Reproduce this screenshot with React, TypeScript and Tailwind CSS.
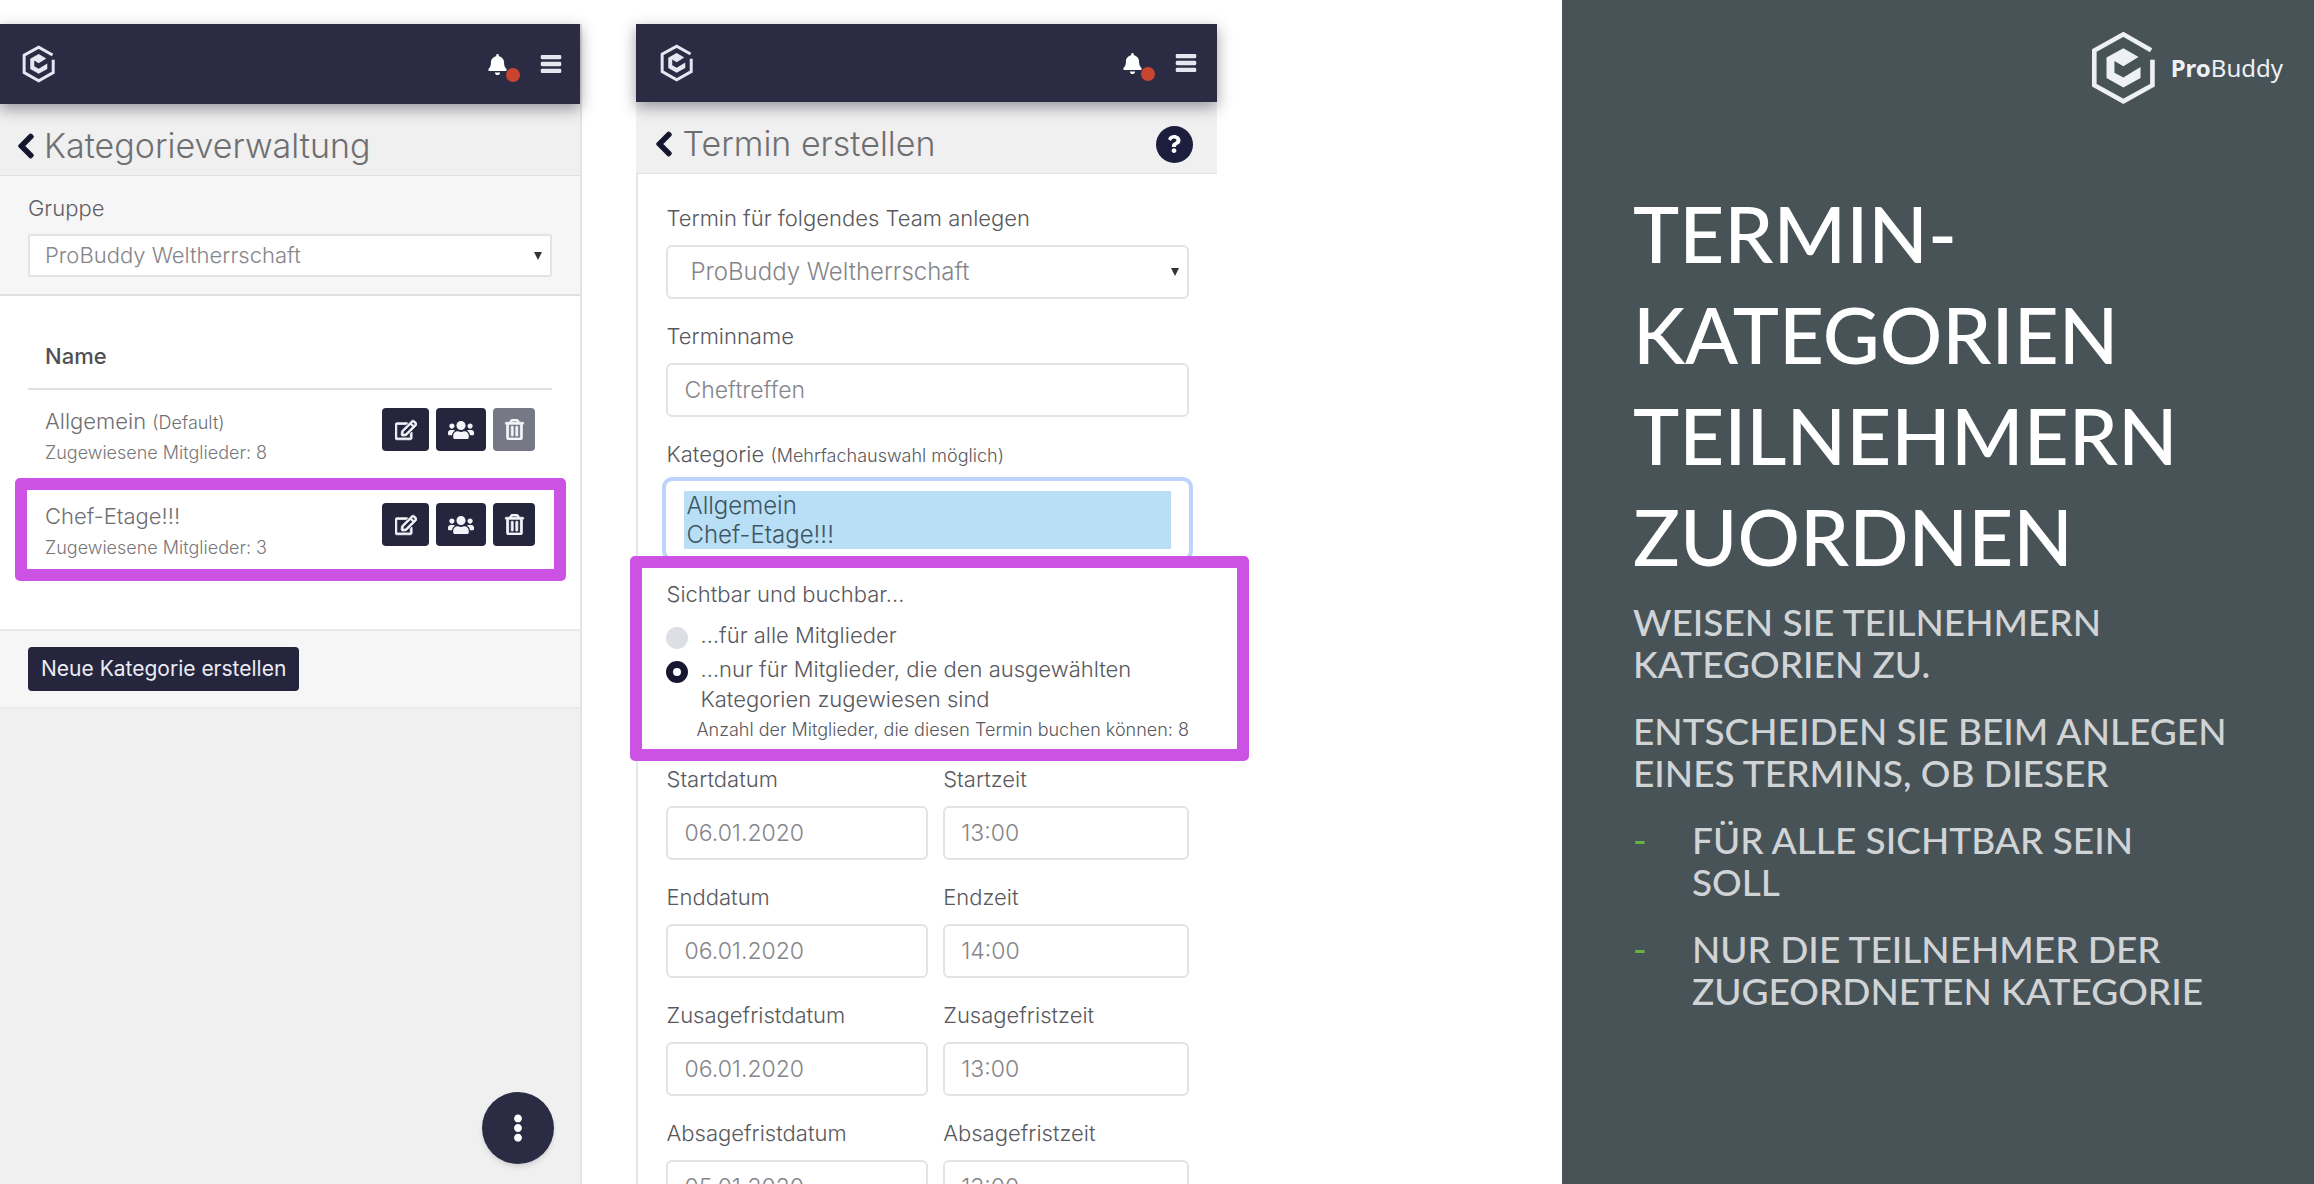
import type { ReactNode } from "react";
import {
  FaBars,
  FaBell,
  FaChevronLeft,
  FaEllipsisV,
  FaQuestion,
  FaRegEdit,
  FaRegTrashAlt,
  FaUsers,
} from "react-icons/fa";

function Logo({ className, weight = 14 }: { className: string; weight?: number }) {
  return (
    <svg viewBox="62 58 202 230" className={className} aria-hidden="true">
      <path
        d="M247 119 L163 71 L75 120 V225 L163 274 L251 225 V148"
        fill="none"
        stroke="currentColor"
        strokeWidth={weight}
      />
      <path
        d="M163 113 L209 140 L163 168 L136 152 V187 L163 202 L215 170 V203 L163 232 L112 203 V141 Z"
        fill="currentColor"
      />
    </svg>
  );
}

function AppHeader({ className }: { className: string }) {
  return (
    <header
      className={`relative z-10 flex shrink-0 items-center justify-between bg-[#2b2c43] text-white shadow-[0_5px_14px_rgba(40,40,60,0.45)] ${className}`}
    >
      <a href="#start" aria-label="ProBuddy">
        <Logo weight={18} className="h-[38px] text-[#e6e7f2]" />
      </a>
      <div className="flex items-center">
        <button type="button" aria-label="Benachrichtigungen" className="relative mr-8">
          <FaBell className="size-[21px]" />
          <span className="absolute top-3.5 left-[19px] size-3.5 rounded-full bg-[#c8452f]" />
        </button>
        <button type="button" aria-label="Menü">
          <FaBars className="size-[22px] stroke-current stroke-[30px] text-[#e6e6f0]" />
        </button>
      </div>
    </header>
  );
}

function TitleBar({ title, className, children }: { title: string; className: string; children?: ReactNode }) {
  return (
    <div
      className={`flex shrink-0 items-center border-b border-[#e0e0e2] bg-[#f0f0f0] pt-[22px] pb-[9px] ${className}`}
    >
      <button type="button" aria-label="Zurück" className="mr-1 text-[#15152f]">
        <FaChevronLeft className="size-7 stroke-current stroke-[20px]" />
      </button>
      <h2 className="text-[34px] leading-10 font-light text-[#6f6f72]">{title}</h2>
      {children}
    </div>
  );
}

function SelectBox({ id, className }: { id: string; className: string }) {
  return (
    <div className="relative">
      <select
        id={id}
        className={`w-full appearance-none border-2 border-[#e3e3e6] bg-white font-light text-[#85858a] ${className}`}
      >
        <option>ProBuddy Weltherrschaft</option>
      </select>
      <svg
        viewBox="0 0 8 8"
        aria-hidden="true"
        className="pointer-events-none absolute top-1/2 right-2.5 size-2 -translate-y-1/2 text-[#333]"
      >
        <path d="M0 0 H8 L4 8 Z" fill="currentColor" />
      </svg>
    </div>
  );
}

function Highlight({ className }: { className: string }) {
  return (
    <span
      className={`pointer-events-none absolute z-20 rounded-[5px] border-12 border-[#cc52e3] ${className}`}
    />
  );
}

function CategoryRow({
  name,
  hint,
  members,
  locked,
  marked,
}: {
  name: string;
  hint?: string;
  members: number;
  locked?: boolean;
  marked?: boolean;
}) {
  return (
    <tr className="relative">
      <td className="pt-[15px] pb-4 pl-[17px] align-top font-light">
        <div className="text-[22px] leading-8 text-[#6f6f73]">
          {name} {hint && <span className="text-lg">{hint}</span>}
        </div>
        <div className="text-lg leading-8 text-[#77777b]">Zugewiesene Mitglieder: {members}</div>
      </td>
      <td className="pt-[18px] pr-[17px] align-top">
        <div className="flex justify-end gap-[7px] text-[#f4f4fa]">
          <button
            type="button"
            aria-label="Bearbeiten"
            className="flex h-[43px] w-[47px] items-center justify-center rounded-[4px] bg-[#25263e]"
          >
            <FaRegEdit className="size-[22px] stroke-current stroke-[20px]" />
          </button>
          <button
            type="button"
            aria-label="Mitglieder"
            className="flex h-[43px] w-[50px] items-center justify-center rounded-[4px] bg-[#25263e]"
          >
            <FaUsers className="size-[26px]" />
          </button>
          <button
            type="button"
            aria-label="Löschen"
            disabled={locked}
            className="flex h-[43px] w-[42px] items-center justify-center rounded-[4px] bg-[#25263e] disabled:bg-[#777886]"
          >
            <FaRegTrashAlt className="size-[21px] stroke-current stroke-[20px]" />
          </button>
        </div>
        {marked && <Highlight className="-top-[7px] right-[-14px] -bottom-px left-[-13px]" />}
      </td>
    </tr>
  );
}

function Field({ id, label, value }: { id: string; label: string; value: string }) {
  return (
    <div>
      <label htmlFor={id} className="mb-[13px] block text-[22px] leading-7">
        {label}
      </label>
      <input
        id={id}
        type="text"
        defaultValue={value}
        className="h-[54px] w-full rounded-md border-2 border-[#e3e3e6] bg-white px-4 text-[23px] font-light text-[#85858a]"
      />
    </div>
  );
}

const schedule = [
  { key: "start", date: "Startdatum", time: "Startzeit", day: "06.01.2020", hour: "13:00" },
  { key: "ende", date: "Enddatum", time: "Endzeit", day: "06.01.2020", hour: "14:00" },
  { key: "zusage", date: "Zusagefristdatum", time: "Zusagefristzeit", day: "06.01.2020", hour: "13:00" },
  { key: "absage", date: "Absagefristdatum", time: "Absagefristzeit", day: "05.01.2020", hour: "13:00" },
];

function CategoryPanel() {
  return (
    <section className="relative flex flex-1 flex-col border-r-2 border-[#e3e3e6] bg-[#f0f0f0]">
      <AppHeader className="h-20 pr-[18px] pl-[22px]" />
      <TitleBar title="Kategorieverwaltung" className="pl-3" />
      <div className="border-b-2 border-[#e0e0e2] bg-[#f6f6f6] px-7 pt-[18px] pb-[17px]">
        <label htmlFor="gruppe" className="mb-3 block text-[22px] leading-7 font-light text-[#5f5f64]">
          Gruppe
        </label>
        <SelectBox id="gruppe" className="h-[43px] rounded-[3px] px-[15px] text-[22px]" />
      </div>
      <div className="bg-white px-7 pb-[49px]">
        <table className="w-full">
          <thead>
            <tr className="border-b-2 border-[#dfe0e6]">
              <th
                colSpan={2}
                className="pt-[46px] pb-[18px] pl-[17px] text-left text-[22px] leading-7 font-medium text-[#505057]"
              >
                Name
              </th>
            </tr>
          </thead>
          <tbody>
            <CategoryRow name="Allgemein" hint="(Default)" members={8} locked />
            <CategoryRow name="Chef-Etage!!!" members={3} marked />
          </tbody>
        </table>
      </div>
      <div className="border-y-2 border-[#e9e9eb] bg-[#f6f6f6] px-7 py-4">
        <button
          type="button"
          className="h-11 rounded-[4px] bg-[#25263e] px-[13px] text-[21px] text-[#ececf4]"
        >
          Neue Kategorie erstellen
        </button>
      </div>
      <button
        type="button"
        aria-label="Mehr"
        className="absolute right-[26px] bottom-5 flex size-[72px] items-center justify-center rounded-full bg-[#2b2c43] text-white shadow-md"
      >
        <FaEllipsisV className="size-7" />
      </button>
    </section>
  );
}

function AppointmentPanel() {
  return (
    <section className="flex flex-1 flex-col">
      <AppHeader className="h-[78px] pr-5 pl-6" />
      <TitleBar title="Termin erstellen" className="pr-6 pl-3.5">
        <button
          type="button"
          aria-label="Hilfe"
          className="ml-auto flex size-[37px] items-center justify-center rounded-full bg-[#1d1d3d] text-white"
        >
          <FaQuestion className="size-[18px]" />
        </button>
      </TitleBar>
      <form className="flex flex-col gap-[23px] border-l-2 border-[#e6e6ea] pt-[30px] pr-7 pl-7 font-light text-[#58585d]">
        <div>
          <label htmlFor="team" className="mb-[13px] block text-[22px] leading-7">
            Termin für folgendes Team anlegen
          </label>
          <SelectBox id="team" className="h-[54px] rounded-md px-[22px] text-[24px]" />
        </div>
        <Field id="terminname" label="Terminname" value="Cheftreffen" />
        <div>
          <label htmlFor="kategorie" className="mb-[11px] block text-[22px] leading-7">
            Kategorie <span className="text-lg">(Mehrfachauswahl möglich)</span>
          </label>
          <select
            id="kategorie"
            multiple
            defaultValue={["Allgemein", "Chef-Etage!!!"]}
            className="block h-[76px] w-full appearance-none overflow-hidden rounded-md bg-white px-[18px] py-2.5 text-[24px] leading-7 ring-4 ring-[#bcd3fb]"
          >
            <option className="h-7 bg-linear-to-r from-[#b8dff5] to-[#b8dff5] p-0 pl-0.5 font-light checked:text-[#3d5562]">
              Allgemein
            </option>
            <option className="h-7 bg-linear-to-r from-[#b8dff5] to-[#b8dff5] p-0 pl-0.5 font-light checked:text-[#3d5562]">
              Chef-Etage!!!
            </option>
          </select>
        </div>
        <div className="relative">
          <fieldset className="text-[22px]">
            <legend className="mb-3 leading-7">Sichtbar und buchbar…</legend>
            <div className="mb-1 flex items-start gap-3 leading-[30px]">
              <input
                id="alle"
                type="radio"
                name="sichtbar"
                className="mt-[7px] size-[22px] shrink-0 appearance-none rounded-full bg-[#dedee5]"
              />
              <label htmlFor="alle">…für alle Mitglieder</label>
            </div>
            <div className="flex items-start gap-3 leading-[30px]">
              <input
                id="zugewiesen"
                type="radio"
                name="sichtbar"
                defaultChecked
                className="mt-[7px] size-[22px] shrink-0 appearance-none rounded-full border-[7px] border-[#17172f] bg-white"
              />
              <label htmlFor="zugewiesen">
                …nur für Mitglieder, die den ausgewählten Kategorien zugewiesen sind
              </label>
            </div>
            <p className="mt-1 pl-[30px] text-lg leading-6">
              Anzahl der Mitglieder, die diesen Termin buchen können: 8
            </p>
          </fieldset>
          <Highlight className="-top-6 right-[-60px] bottom-[-19px] left-[-36px]" />
        </div>
        {schedule.map((row) => (
          <div key={row.key} className="grid grid-cols-[262fr_246fr] gap-[15px]">
            <Field id={`${row.key}-datum`} label={row.date} value={row.day} />
            <Field id={`${row.key}-zeit`} label={row.time} value={row.hour} />
          </div>
        ))}
      </form>
    </section>
  );
}

export default function App() {
  return (
    <div className="flex h-screen overflow-hidden bg-white font-['Inter',sans-serif]">
      <main className="flex flex-1 gap-[54px] pt-6 pr-[345px]">
        <CategoryPanel />
        <AppointmentPanel />
      </main>
      <aside className="w-[32.5%] bg-[#485357] px-[71px] pt-[30px] font-['Lato',sans-serif] font-medium">
        <div className="-mr-10 flex items-center justify-end gap-3.5 font-['Noto_Sans',sans-serif] text-2xl font-normal text-[#eef1f4]">
          <Logo className="h-[76px]" />
          <span>
            <b>Pro</b>Buddy
          </span>
        </div>
        <h1 className="mt-[77px] text-[78px] leading-[101px] text-white">
          TERMIN-
          <br />
          KATEGORIEN
          <br />
          TEILNEHMERN
          <br />
          ZUORDNEN
        </h1>
        <div className="flex flex-col gap-[25px] pt-3.5 text-[37px] leading-[42px] whitespace-nowrap text-[#d1d4d6]">
          <p>
            WEISEN SIE TEILNEHMERN
            <br />
            KATEGORIEN ZU.
          </p>
          <p>
            ENTSCHEIDEN SIE BEIM ANLEGEN
            <br />
            EINES TERMINS, OB DIESER
          </p>
          <ul className="flex flex-col gap-[25px]">
            <li className="flex">
              <span className="w-[59px] shrink-0 text-[#66b245]">-</span>
              <span>
                FÜR ALLE SICHTBAR SEIN
                <br />
                SOLL
              </span>
            </li>
            <li className="flex">
              <span className="w-[59px] shrink-0 text-[#66b245]">-</span>
              <span>
                NUR DIE TEILNEHMER DER
                <br />
                ZUGEORDNETEN KATEGORIE
              </span>
            </li>
          </ul>
        </div>
      </aside>
    </div>
  );
}
